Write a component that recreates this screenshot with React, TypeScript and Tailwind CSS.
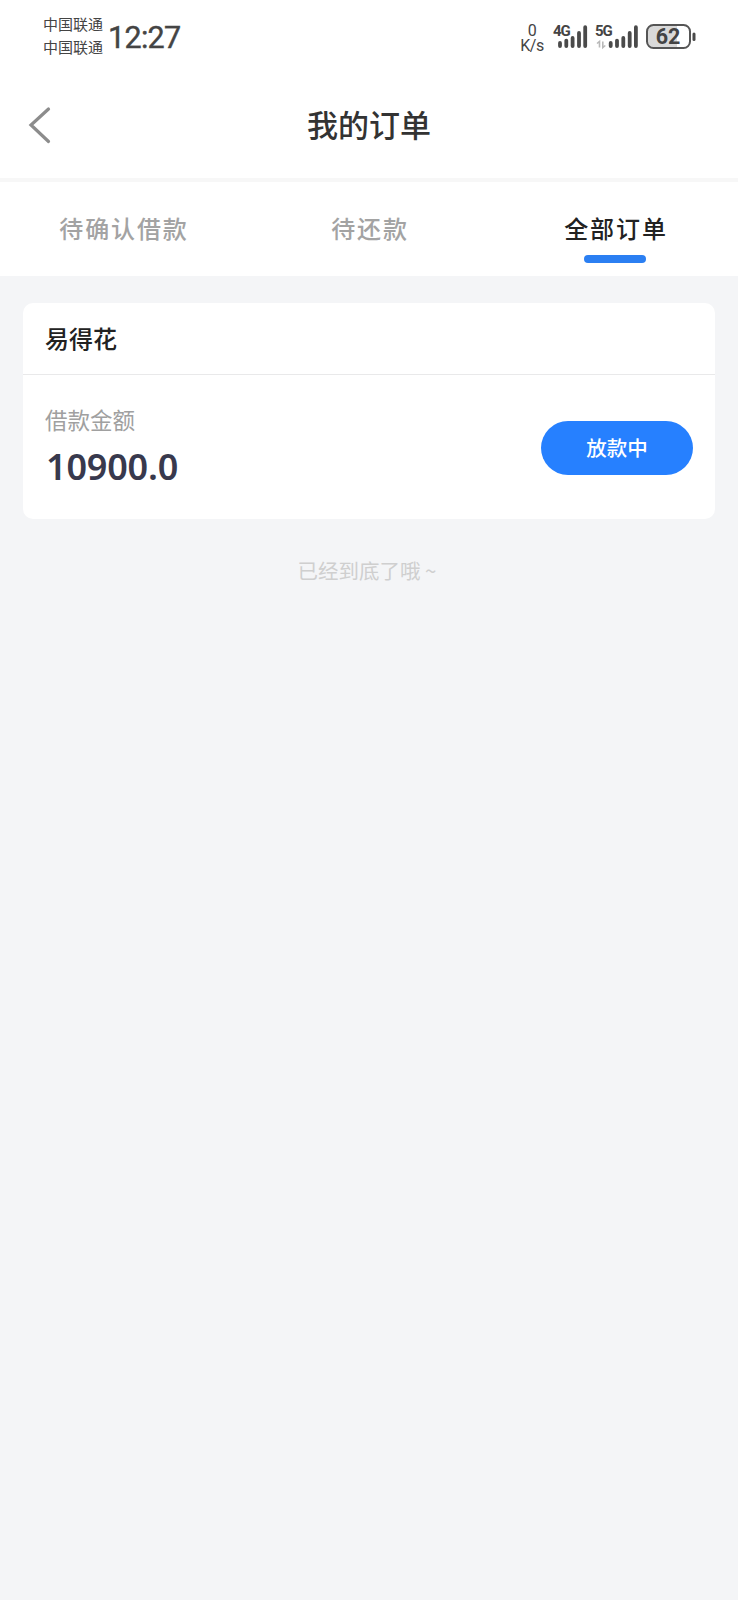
import clsx from 'clsx'

const TABS = [
  { key: 'confirm', label: '待确认借款' },
  { key: 'repay', label: '待还款' },
  { key: 'all', label: '全部订单' },
]

const ORDERS = [{ id: 1, name: '易得花', amount: '10900.0', status: '放款中' }]

function Signal({ label, idle }: { label: string; idle?: boolean }) {
  return (
    <div className="relative h-[25px] w-[42px]">
      <svg className="h-[25px] w-[42px] overflow-visible" viewBox="0 0 42 25" fill="none" aria-hidden="true">
        <path
          d="M6 18.900v3.200M12.300 16.600v5.500M18.600 13.900v8.200M25 8.900v13.200M31.200 3.200v18.900"
          transform={idle ? 'translate(8.7 0)' : undefined}
          stroke="#4a4a4a"
          strokeWidth="3.800"
          strokeLinecap="round"
        />
        {idle && <path d="M1 19.500l2.500-2v6M6.800 17.500v6l2.500-2" stroke="#b9b9b9" strokeWidth="1.600" />}
      </svg>
      <span className="absolute top-0 -left-px font-['Roboto'] text-[15px] leading-[15px] font-bold tracking-[-1.2px]">
        {label}
      </span>
    </div>
  )
}

function StatusBar() {
  return (
    <div className="flex h-[76px] items-start justify-between pl-[43px] pr-[42px] text-[#444]">
      <div className="flex">
        <div className="pt-[13px] text-[15px] leading-[22.5px]">
          <div>中国联通</div>
          <div>中国联通</div>
        </div>
        <div className="ml-[5px] pt-[18px] font-['Roboto'] text-[30.5px] leading-[40px] tracking-[-0.7px] [-webkit-text-stroke:0.4px_#444]">
          12:27
        </div>
      </div>
      <div className="flex pt-[24px]">
        <div className="mr-[10px] -mt-px flex w-[24px] flex-col items-center font-['Roboto'] text-[16px] leading-[15px] tracking-[-0.4px]">
          <span>0</span>
          <span>K/s</span>
        </div>
        <Signal label="4G" />
        <Signal label="5G" idle />
        <div className="relative ml-[8px] h-[25px] w-[50px]">
          <svg className="h-[25px] w-[50px]" viewBox="0 0 50 25" fill="none" aria-hidden="true">
            <path d="M7 1h24v23H7a6 6 0 0 1-6-6V7a6 6 0 0 1 6-6z" fill="#d9d9d9" />
            <rect x="1" y="1" width="43" height="23" rx="6.500" stroke="#555" strokeWidth="2" />
            <path d="M48 10v5.500" stroke="#4a4a4a" strokeWidth="3" strokeLinecap="round" />
          </svg>
          <span className="absolute inset-y-0 left-0 w-[44px] text-center font-['Roboto'] text-[21.5px] leading-[26px] font-bold">
            62
          </span>
        </div>
      </div>
    </div>
  )
}

function Header() {
  return (
    <header className="grid h-[106px] grid-cols-[100px_1fr_100px] items-center border-b-4 border-[#f7f7f7] pb-1">
      <button type="button" aria-label="返回" className="pl-[28px]">
        <svg className="h-[38px] w-[24px]" viewBox="0 0 24 38" fill="none">
          <path d="M20.500 3L3 19l17.500 16.500" stroke="#8c8c8c" strokeWidth="3.200" strokeLinecap="round" />
        </svg>
      </button>
      <h1 className="pb-[3px] text-center text-[31px] leading-[40px] font-medium text-[#333]">我的订单</h1>
    </header>
  )
}

function OrderCard({ order }: { order: (typeof ORDERS)[number] }) {
  return (
    <section className="rounded-[10px] bg-white">
      <h2 className="border-b border-[#e9e9ea] px-[22px] pt-[17px] pb-[19px] text-[24px] leading-[35px] font-medium text-[#222]">
        {order.name}
      </h2>
      <div className="flex h-[144px] items-center justify-between px-[22px]">
        <div className="-mt-[3px]">
          <div className="text-[22.5px] leading-[34px] text-[#a0a0a0]">借款金额</div>
          <div className="mt-[9px] pl-px font-['Noto_Sans'] text-[36px] leading-[44px] font-semibold tracking-[-0.2px] text-[#38394d]">
            {order.amount}
          </div>
        </div>
        <button
          type="button"
          className="mt-px h-[54px] w-[152px] rounded-full bg-[#2680ff] text-[20.5px] font-medium text-white"
        >
          {order.status}
        </button>
      </div>
    </section>
  )
}

export default function App() {
  const active = 'all'

  return (
    <div className="min-h-[1600px] bg-[#f4f5f7] font-['Noto_Sans_CJK_SC',sans-serif]">
      <div className="bg-white">
        <StatusBar />
        <Header />
        <nav className="grid h-[94px] grid-cols-3">
          {TABS.map((tab) => (
            <div key={tab.key} className="flex flex-col items-center pt-[28px]">
              <span
                className={clsx(
                  'pl-[2px] text-[24px] leading-[36px] font-medium tracking-[1.9px]',
                  tab.key === active ? 'text-[#222]' : 'text-[#a3a3a3]',
                )}
              >
                {tab.label}
              </span>
              {tab.key === active && <span className="mt-[9px] h-[8px] w-[62px] rounded-full bg-[#2b7ff2]" />}
            </div>
          ))}
        </nav>
      </div>

      <main className="px-[23px] pt-[27px]">
        {ORDERS.map((order) => (
          <OrderCard key={order.id} order={order} />
        ))}
        <p className="mt-[36px] pr-[4px] text-center text-[20.5px] leading-[30px] text-[#cfcfcf]">已经到底了哦 ~</p>
      </main>
    </div>
  )
}
